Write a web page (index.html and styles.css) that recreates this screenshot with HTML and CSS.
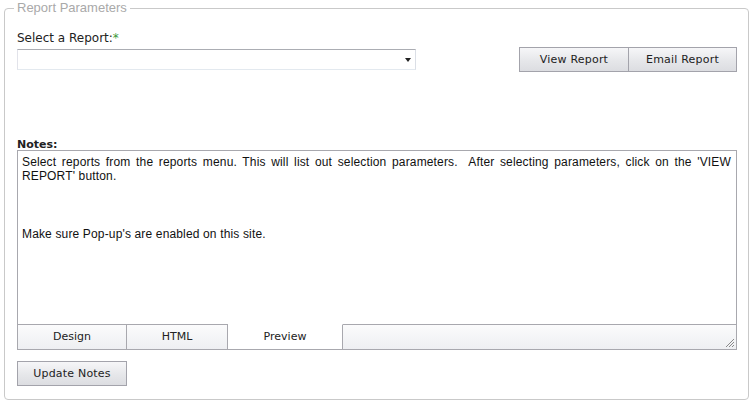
FILE: index.html
```html
<!DOCTYPE html>
<html lang="en">
<head>
  <meta charset="UTF-8">
  <title>Report Parameters</title>
  <link rel="stylesheet" href="styles.css">
</head>
<body>

  <fieldset class="params">
    <legend>Report Parameters</legend>

    <div class="top-row">
      <div class="report-pick">
        <label class="field-label">Select a Report:<span class="req">*</span></label>
        <div class="select-box">
          <span class="arrow"></span>
        </div>
      </div>
      <div class="btn-group">
        <button class="btn">View Report</button>
        <button class="btn">Email Report</button>
      </div>
    </div>

    <div class="notes">
      <div class="notes-label">Notes:</div>
      <div class="editor">
        <div class="editor-body">
          Select reports from the reports menu. This will list out selection parameters.&nbsp; After selecting parameters, click on the 'VIEW REPORT' button.<br>
          <br>
          <br>
          <br>
          Make sure Pop-up's are enabled on this site.
        </div>
        <div class="editor-tabs">
          <div class="tab tab-design">Design</div>
          <div class="tab tab-html">HTML</div>
          <div class="tab tab-preview active">Preview</div>
          <div class="tab-rest">
            <svg class="grip" width="10" height="10" viewBox="0 0 10 10">
              <path d="M9 1 L1 9 M9 4 L4 9 M9 7 L7 9" stroke="#8a8a8a" stroke-width="1" fill="none"/>
            </svg>
          </div>
        </div>
      </div>
    </div>

    <button class="btn btn-update">Update Notes</button>
  </fieldset>

</body>
</html>
```

FILE: styles.css
```css
html, body {
  margin: 0;
  padding: 0;
  background-color: #fff;
  font-family: "DejaVu Sans", Verdana, sans-serif;
  font-size: 11px;
  color: #222;
}
.params {
  margin: 0 0 0 4px;
  width: 720px;
  height: 398px;
  padding: 0 11px 0 12px;
  border: 1px solid #c9c9c9;
  border-radius: 4px;
  box-sizing: content-box;
}
.params legend {
  font-family: "Liberation Sans", Arial, sans-serif;
  font-size: 13px;
  line-height: 16px;
  color: #a9a9a9;
  padding: 0 3px;
  margin-left: -3px;
}
.top-row {
  display: flex;
  justify-content: space-between;
  align-items: flex-start;
  margin-top: 15px;
}
.field-label {
  display: block;
  font-size: 12px;
  line-height: 14px;
  height: 18px;
}
.req {
  color: #3a9a3a;
}
.select-box {
  position: relative;
  width: 397px;
  height: 19px;
  border: 1px solid #abadb3;
  border-color: #abadb3 #dbdfe6 #e3e9ef #e2e3ea;
  background: #fff;
}
.arrow {
  position: absolute;
  right: 4px;
  top: 8px;
  border-left: 3px solid transparent;
  border-right: 3px solid transparent;
  border-top: 4px solid #222;
}
.btn-group {
  display: flex;
  margin-top: 16px;
}
.btn {
  height: 25px;
  padding: 0;
  border: 1px solid #a3a3ab;
  background: linear-gradient(#f6f6f8, #e6e7ea 55%, #dcdde1);
  font-family: "DejaVu Sans", Verdana, sans-serif;
  font-size: 11px;
  letter-spacing: 0.2px;
  color: #222;
  cursor: pointer;
}
.btn-group .btn {
  width: 110px;
}
.btn-group .btn + .btn {
  margin-left: -1px;
  width: 109px;
}
.notes {
  margin-top: 65px;
}
.notes-label {
  font-weight: bold;
  line-height: 15px;
  height: 13px;
}
.editor {
  border: 1px solid #a8a8ae;
  height: 198px;
  display: flex;
  flex-direction: column;
}
.editor-body {
  flex: 1;
  padding: 4px 5px 4px 4px;
  font-family: "Liberation Sans", Arial, sans-serif;
  font-size: 12px;
  line-height: 14.4px;
  letter-spacing: 0.15px;
  text-align: justify;
  color: #111;
}
.editor-tabs {
  display: flex;
  height: 25px;
}
.tab {
  box-sizing: border-box;
  height: 25px;
  line-height: 24px;
  text-align: center;
  border-top: 1px solid #a8a8ae;
  border-right: 1px solid #a8a8ae;
  background: linear-gradient(#fbfbfc, #eeeff2);
}
.tab-design { width: 109px; }
.tab-html { width: 101px; }
.tab-preview { width: 115px; }
.tab.active {
  background: #fff;
  border-top-color: #fff;
}
.tab-rest {
  flex: 1;
  position: relative;
  border-top: 1px solid #a8a8ae;
  background: linear-gradient(#fbfbfc, #eeeff2);
}
.grip {
  position: absolute;
  right: 1px;
  bottom: 1px;
}
.btn-update {
  width: 110px;
  margin-top: 11px;
}
```
